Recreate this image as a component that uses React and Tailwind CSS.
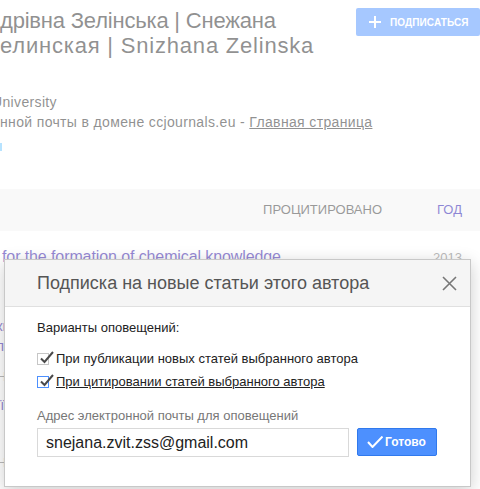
import React from 'react';

const Checkbox = ({ focused }) => (
  <span
    className={`relative inline-block w-[12px] h-[12px] shrink-0 bg-white border ${
      focused ? 'border-[#4d90fe]' : 'border-[#c6c6c6]'
    }`}
  >
    <svg className="absolute left-[1px] top-[-4px] w-[15px] h-[15px]" viewBox="0 0 15 15" fill="none">
      <path d="M2 8.5 L5.5 12 L14 2" stroke="#4a4a4a" strokeWidth="2" />
    </svg>
  </span>
);

const App = () => {
  return (
    <div className="relative w-[480px] h-[489px] overflow-hidden bg-white font-['Liberation_Sans',Arial,sans-serif]">
      {/* page behind the dialog */}
      <div>
        <div className="flex items-start pt-[8px]">
          <h1 className="text-[22px] leading-[25px] text-[#222] whitespace-nowrap">
            <div className="tracking-[-0.2px]">дрівна Зелінська | Снежана</div>
            <div className="tracking-[0.8px]">елинская | Snizhana Zelinska</div>
          </h1>
          <button className="ml-auto flex items-center h-[28px] w-[124px] pl-[13px] rounded-[2px] bg-[#4d90fe] text-white">
            <svg className="w-[12px] h-[12px]" viewBox="0 0 12 12">
              <path d="M6 0 V12 M0 6 H12" stroke="#fff" strokeWidth="2" />
            </svg>
            <span className="ml-[9px] text-[10px] font-bold tracking-[0.1px]">ПОДПИСАТЬСЯ</span>
          </button>
        </div>

        <div className="mt-[34px] text-[14px] leading-[20px] text-[#222] whitespace-nowrap tracking-[0.35px]">
          <div className="ml-[-8px]">University</div>
          <div>
            нной почты в домене ccjournals.eu - <span className="underline text-[#222]">Главная страница</span>
          </div>
        </div>

        <div className="mt-[11px] w-[2px] h-[8px] bg-[#6fc6ff]" />

        <div className="mt-[38px] h-[42px] bg-[#f3f3f3] flex items-center justify-end pr-[18px] text-[13px]">
          <span className="text-[#333]">ПРОЦИТИРОВАНО</span>
          <span className="ml-[55px] text-[#1a0dab]">ГОД</span>
        </div>

        <div className="pt-[16px] pr-[18px]">
          <div className="flex items-baseline">
            <span className="ml-[2px] text-[16px] leading-[20px] text-[#2d0fa8] whitespace-nowrap tracking-[-0.1px]">
              for the formation of chemical knowledge
            </span>
            <span className="ml-auto text-[13px] text-[#777]">2013</span>
          </div>
          <div className="mt-[48px] text-[15px] leading-[20px] text-[#2d0fa8] whitespace-nowrap">
            <div className="ml-[-4px]">книги</div>
            <div className="ml-[-4px]">підручник</div>
          </div>
          <div className="mt-[13px] text-[13px] leading-[16px] text-[#777] ml-[-3px]">Н</div>
          <div className="mt-[10px] text-[15px] leading-[20px] text-[#2d0fa8] ml-[-3px]">ії</div>
          <div className="mt-[40px] text-[13px] leading-[16px] text-[#777] ml-[-3px]">Н</div>
        </div>
      </div>

      {/* dim layer */}
      <div className="absolute inset-0 bg-white/50" />

      {/* subscription dialog */}
      <div className="absolute left-[4px] top-[259px] w-[467px] h-[228px] bg-white border border-[#c8c8c8] shadow-[0_4px_16px_rgba(0,0,0,0.2)]">
        <div className="h-[47px] bg-[#f5f5f5] border-b border-[#e0e0e0] flex items-center pl-[32px] pr-[13px]">
          <span className="text-[18px] text-[#555]">Подписка на новые статьи этого автора</span>
          <svg className="ml-auto w-[15px] h-[15px]" viewBox="0 0 15 15">
            <path d="M1 1 L14 14 M14 1 L1 14" stroke="#777" strokeWidth="1.6" />
          </svg>
        </div>

        <div className="pl-[32px] pt-[13px] text-[13px] leading-[16px]">
          <div className="text-[#222]">Варианты оповещений:</div>

          <div className="mt-[15px] flex items-center text-[#222]">
            <Checkbox />
            <span className="ml-[7px]">При публикации новых статей выбранного автора</span>
          </div>

          <div className="mt-[7px] flex items-center text-[#222]">
            <Checkbox focused />
            <span className="ml-[7px] underline">При цитировании статей выбранного автора</span>
          </div>

          <div className="mt-[18px] text-[#777]">Адрес электронной почты для оповещений</div>

          <div className="mt-[4px] flex items-start">
            <div className="w-[312px] h-[29px] border border-[#d9d9d9] flex items-center pl-[8px] text-[16px] text-[#222]">
              snejana.zvit.zss@gmail.com
            </div>
            <button className="ml-[8px] w-[80px] h-[28px] rounded-[2px] bg-[#4d90fe] border border-[#3079ed] flex items-center pl-[9px] text-white">
              <svg className="w-[16px] h-[12px]" viewBox="0 0 16 12" fill="none">
                <path d="M1 6 L5.5 11 L15.5 0.5" stroke="#fff" strokeWidth="2" />
              </svg>
              <span className="ml-[2px] text-[12px] font-bold">Готово</span>
            </button>
          </div>
        </div>
      </div>
    </div>
  );
};

export default App;
